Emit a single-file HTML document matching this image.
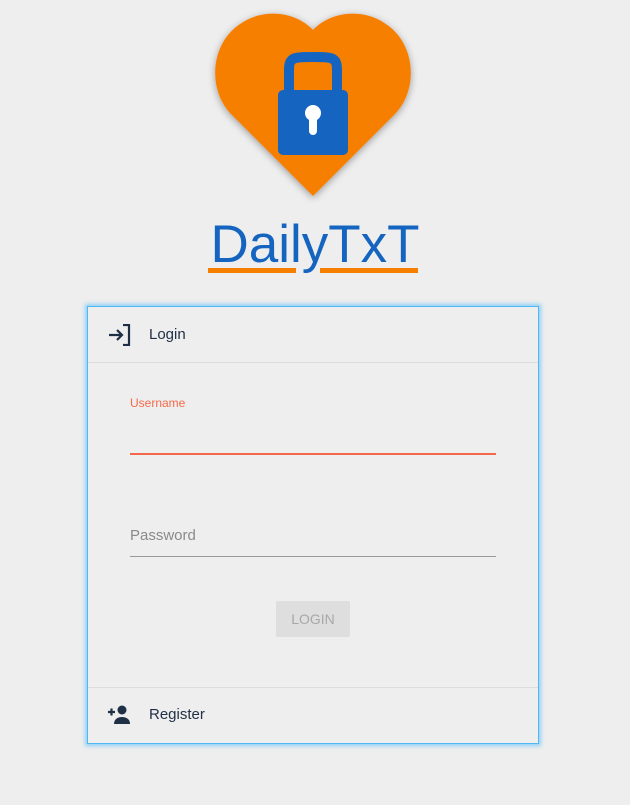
<!DOCTYPE html>
<html><head><meta charset="utf-8"><style>
body{margin:0;width:630px;height:805px;background:#eeeeee;font-family:"Liberation Sans",sans-serif;position:relative;overflow:hidden}
.abs{position:absolute}
.title{left:0;width:630px;top:214px;text-align:center;font-size:53px;color:#1565c0}
.card{left:87px;top:306px;width:450px;height:436px;border:1px solid #4fb8f0;box-shadow:0 0 4px 2px #8fd0f7;background:#eeeeee}
.hr{left:0;width:450px;height:1px;background:#dcdcdc}
.t{color:#1f2f45;font-size:15px}
</style></head><body>
<svg class="abs" style="left:200px;top:0" width="230" height="210" viewBox="0 0 230 210">
<defs><filter id="s" x="-20%" y="-20%" width="140%" height="140%"><feGaussianBlur in="SourceAlpha" stdDeviation="4"/><feOffset dy="2"/><feComponentTransfer><feFuncA type="linear" slope="0.35"/></feComponentTransfer><feMerge><feMergeNode/><feMergeNode in="SourceGraphic"/></feMerge></filter></defs>
<path filter="url(#s)" fill="#f77f00" d="M113 196 L32 115 C8 91 10 48 36 27 C62 6 96 12 113 30 C130 12 164 6 190 27 C216 48 218 91 194 115 Z"/>
<path fill="none" stroke="#1565c0" stroke-width="10" d="M89 92 V70 C89 57 94 57 113 57 C132 57 137 57 137 70 V92"/>
<rect x="78" y="90" width="70" height="65" rx="5" fill="#1565c0"/>
<circle cx="113" cy="113" r="8" fill="#fff"/>
<rect x="109" y="113" width="8" height="22" rx="4" fill="#fff"/>
</svg>
<div class="abs title">DailyTxT</div>
<div class="abs" style="left:208px;top:268px;width:88px;height:5px;background:#f77f00"></div>
<div class="abs" style="left:320px;top:268px;width:98px;height:5px;background:#f77f00"></div>
<div class="abs card">
 <svg class="abs" style="left:20px;top:17px" width="24" height="22" viewBox="0 0 24 22"><path d="M1 11H13M9 6l5 5-5 5" fill="none" stroke="#1f2f45" stroke-width="2.2"/><path d="M15 1H21V21H15" fill="none" stroke="#1f2f45" stroke-width="2.2"/></svg>
 <div class="abs t" style="left:61px;top:19px">Login</div>
 <div class="abs hr" style="top:55px"></div>
 <div class="abs" style="left:42px;top:89px;font-size:12px;color:#f4694b">Username</div>
 <div class="abs" style="left:42px;top:146px;width:366px;height:2px;background:#f4694b"></div>
 <div class="abs" style="left:42px;top:220px;font-size:15px;color:#8a8a8a">Password</div>
 <div class="abs" style="left:42px;top:249px;width:366px;height:1px;background:#999"></div>
 <div class="abs" style="left:188px;top:294px;width:74px;height:36px;background:#dedede;border-radius:2px;color:#a8a8a8;font-size:14px;line-height:36px;text-align:center">LOGIN</div>
 <div class="abs hr" style="top:380px"></div>
 <svg class="abs" style="left:19px;top:397px" width="26" height="22" viewBox="0 0 26 22"><path d="M1 8h7M4.5 4.5v7" stroke="#1f2f45" stroke-width="2.2"/><circle cx="15" cy="6" r="4.5" fill="#1f2f45"/><path d="M7 20c0-5 4-7 8-7s8 2 8 7z" fill="#1f2f45"/></svg>
 <div class="abs t" style="left:61px;top:399px">Register</div>
</div>
</body></html>
